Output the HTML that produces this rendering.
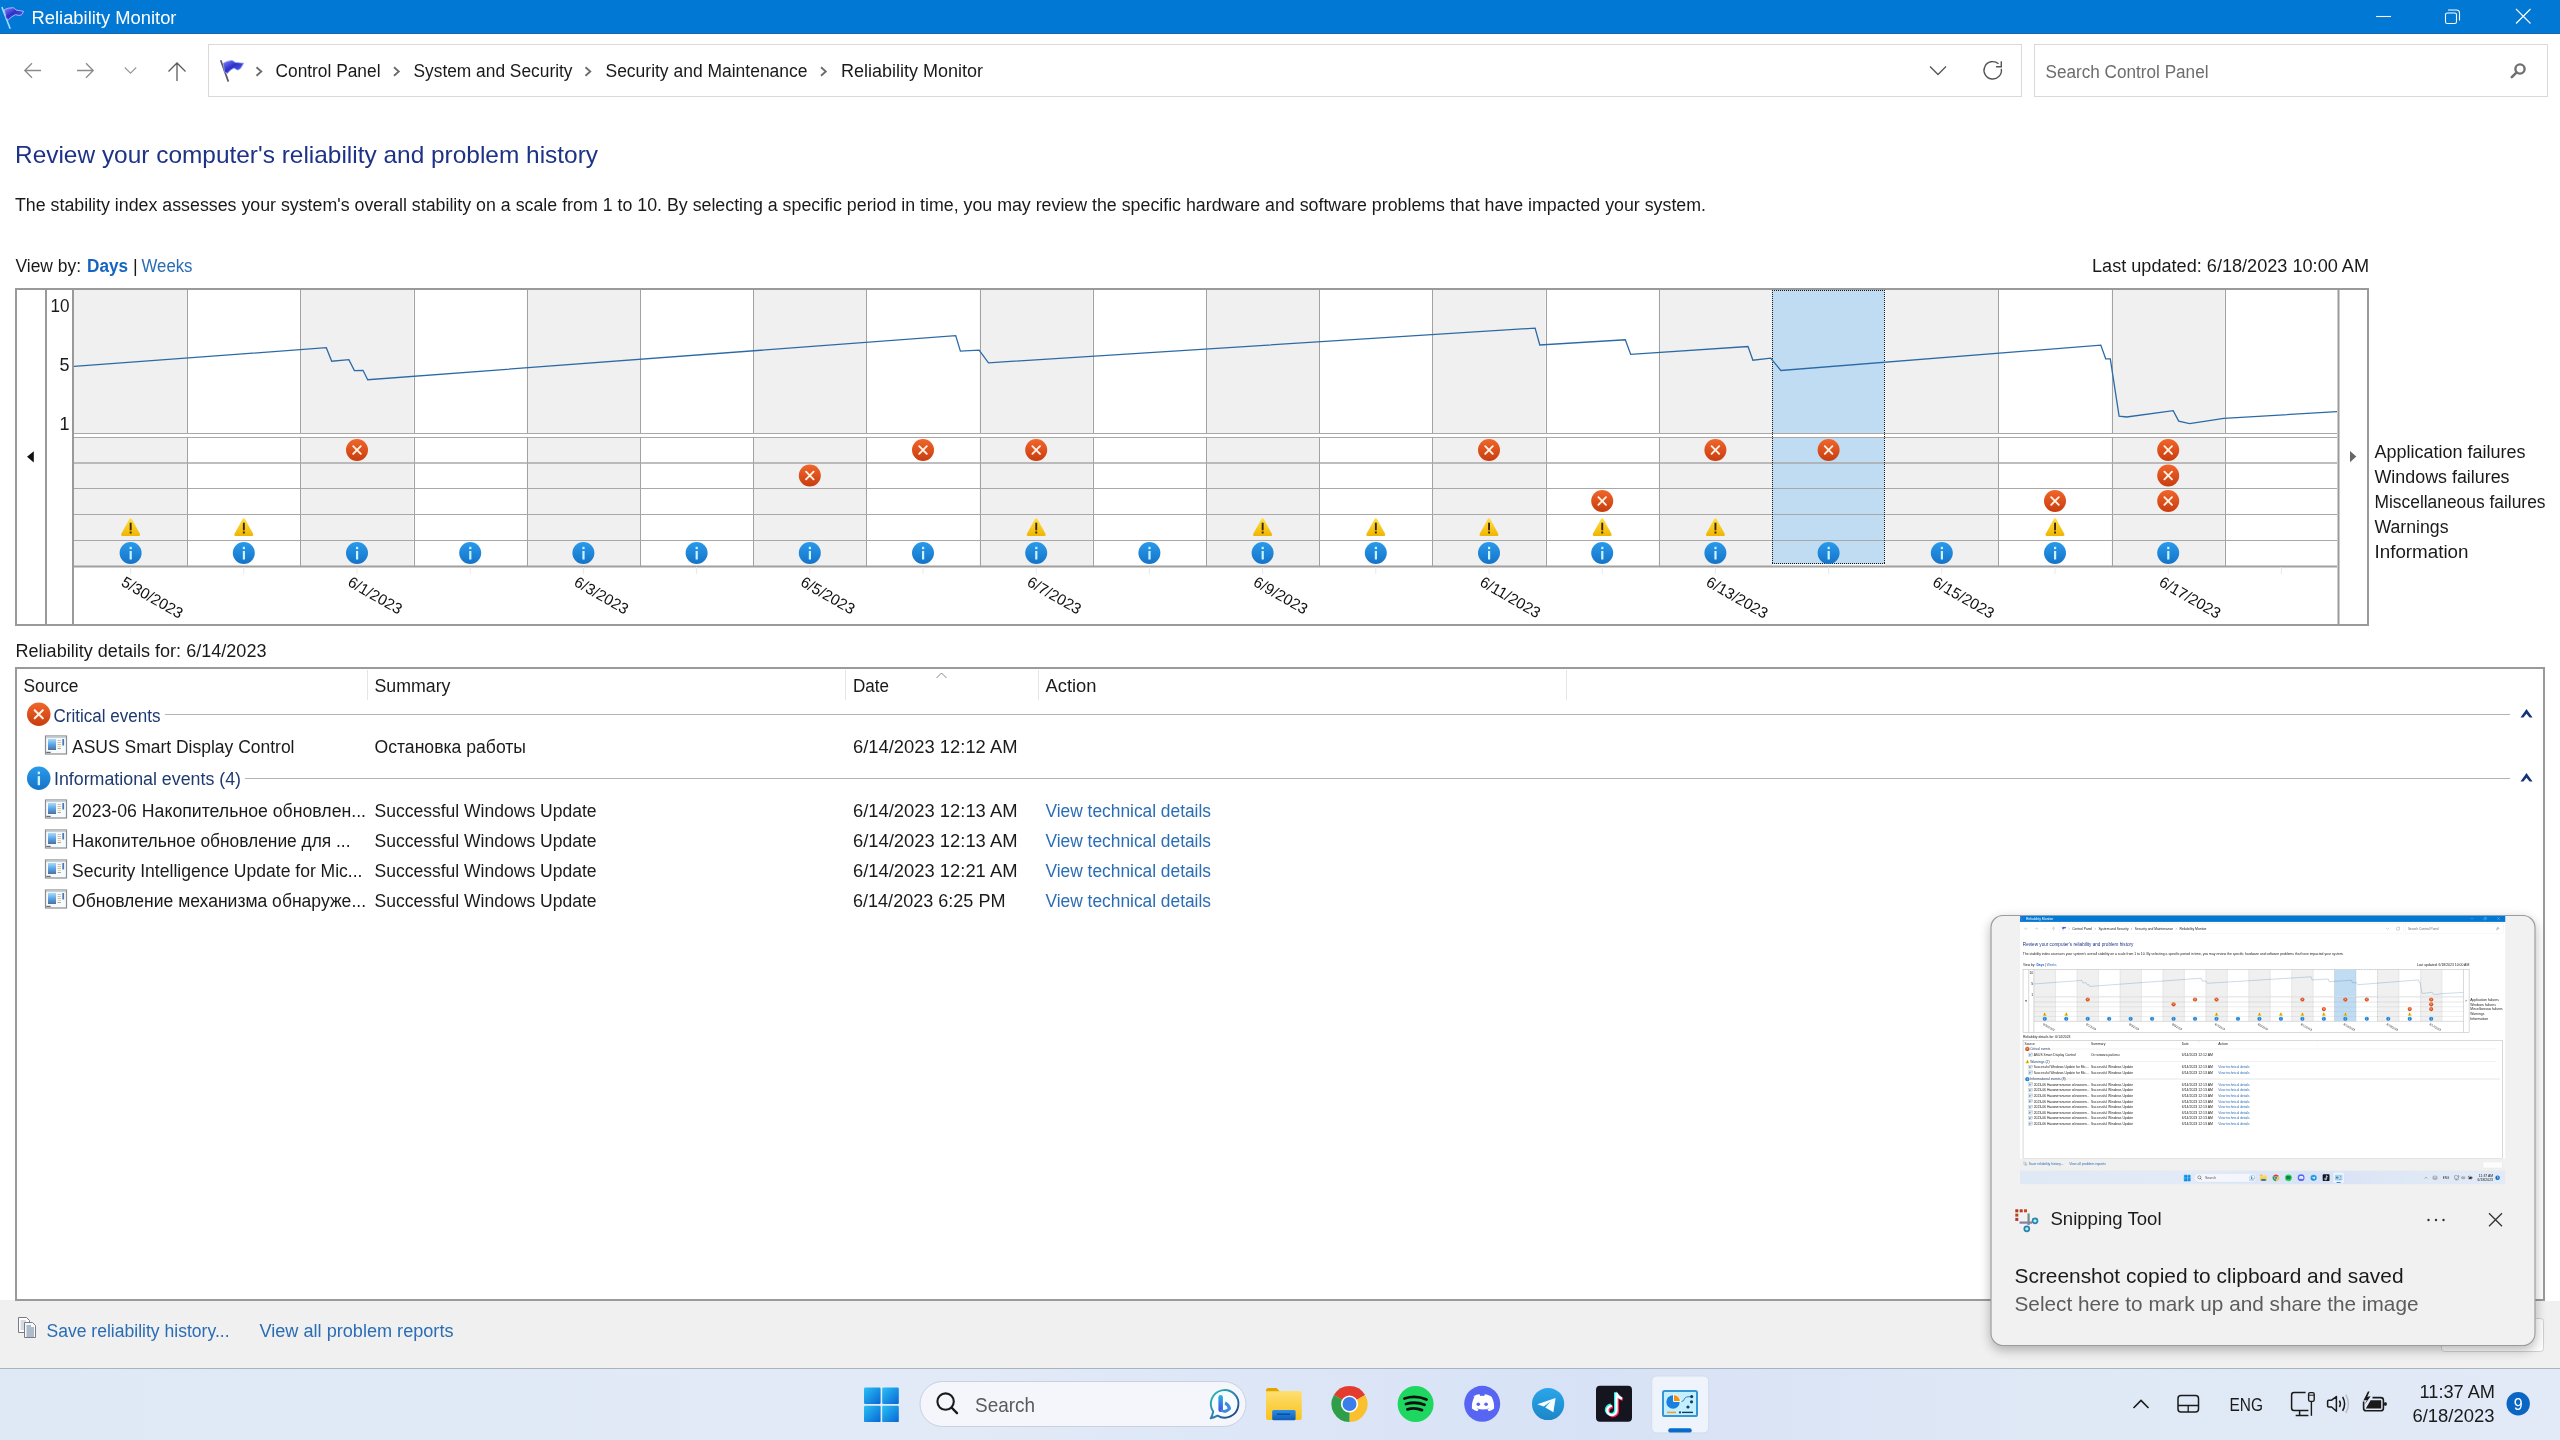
<!DOCTYPE html><html><head><meta charset="utf-8"><style>*{margin:0;padding:0}html,body{width:2560px;height:1440px;overflow:hidden;background:#fff}svg{display:block;will-change:transform}text{font-family:"Liberation Sans",sans-serif;white-space:pre}</style></head><body>
<svg width="2560" height="1440" viewBox="0 0 2560 1440">

<defs>
 <linearGradient id="gErr" x1="0" y1="0" x2="0" y2="1">
  <stop offset="0" stop-color="#f0662a"/><stop offset="1" stop-color="#c83c10"/>
 </linearGradient>
 <linearGradient id="gInfo" x1="0" y1="0" x2="0" y2="1">
  <stop offset="0" stop-color="#2a9aea"/><stop offset="1" stop-color="#1573c8"/>
 </linearGradient>
 <linearGradient id="gWarn" x1="0" y1="0" x2="0" y2="1">
  <stop offset="0" stop-color="#ffe04a"/><stop offset="1" stop-color="#f0b400"/>
 </linearGradient>
 <linearGradient id="gApp" x1="0" y1="0" x2="0" y2="1">
  <stop offset="0" stop-color="#a8dcf5"/><stop offset=".5" stop-color="#5aa6ec"/><stop offset="1" stop-color="#50709a"/>
 </linearGradient>
 <linearGradient id="gFlag" x1="0" y1="0" x2="1" y2="1">
  <stop offset="0" stop-color="#8fa8ff"/><stop offset=".5" stop-color="#3a4fd8"/><stop offset="1" stop-color="#6e8cf0"/>
 </linearGradient>
 <symbol id="err" viewBox="0 0 22 22" overflow="visible">
  <circle cx="11" cy="11" r="11" fill="url(#gErr)"/>
  <path d="M7.2 7.2L14.8 14.8M14.8 7.2L7.2 14.8" stroke="#fff3e6" stroke-width="1.9" stroke-linecap="round"/>
 </symbol>
 <symbol id="info" viewBox="0 0 22 22" overflow="visible">
  <circle cx="11" cy="11" r="11" fill="url(#gInfo)"/>
  <rect x="10" y="9" width="2.2" height="8.5" fill="#c8f4ff"/>
  <rect x="10" y="4.8" width="2.2" height="2.4" fill="#c8f4ff"/>
 </symbol>
 <symbol id="warn" viewBox="0 0 20 19" overflow="visible">
  <path d="M10 0.8 Q10.9 0.8 11.5 1.9 L19.4 16.6 Q20 18.6 18.2 18.6 L1.8 18.6 Q0 18.6 0.6 16.6 L8.5 1.9 Q9.1 0.8 10 0.8Z" fill="url(#gWarn)"/>
  <rect x="9.1" y="5.2" width="1.9" height="7.6" fill="#3a2800"/>
  <rect x="9.1" y="14" width="1.9" height="2" fill="#3a2800"/>
 </symbol>
 <symbol id="app" viewBox="0 0 22 19" overflow="visible">
  <rect x="0.5" y="0.5" width="21" height="18" fill="#f6fbff" stroke="#8c8c8c" stroke-width="1.2"/>
  <rect x="1" y="1" width="20" height="1.6" fill="#c9ced4"/>
  <rect x="3" y="3.5" width="8" height="11" fill="url(#gApp)"/>
  <rect x="12.5" y="4.5" width="3.5" height="0.9" fill="#c8b9b4"/>
  <rect x="12.5" y="6.5" width="3.5" height="0.9" fill="#e0b090"/>
  <rect x="12.5" y="8.5" width="3.5" height="0.9" fill="#e6b070"/>
  <rect x="12.5" y="10.5" width="3.5" height="0.9" fill="#e8d090"/>
  <rect x="12.5" y="12.5" width="3.5" height="0.9" fill="#9aa0a8"/>
  <rect x="17.3" y="3.5" width="1.8" height="6.5" fill="#4a7cb8"/>
  <rect x="1.2" y="16.3" width="4.5" height="1.2" fill="#707070"/>
 </symbol>
 <linearGradient id="gFlag2" x1="0" y1="0" x2="1" y2="1">
  <stop offset="0" stop-color="#7f86ff"/><stop offset=".45" stop-color="#2f30c8"/><stop offset="1" stop-color="#5a6cf0"/>
 </linearGradient>
 <symbol id="flagT" viewBox="0 0 26 26" overflow="visible">
  <path d="M0 0L8.3 21.7" stroke="#9fdcff" stroke-width="1.6"/>
  <path d="M2.4 2.6Q6 0.6 11.4 0.6Q13.2 1.2 14.2 3L21.8 4.2L19.8 7.6Q18 8.6 16.8 8.3L13.5 7.6L10 9.6L6.6 12.6L4.2 11.5Z" fill="url(#gFlag2)" stroke="#a9b4ff" stroke-width="1"/>
 </symbol>
 <symbol id="flagB" viewBox="0 0 26 26" overflow="visible">
  <path d="M0 0L7.7 21.4" stroke="#5a5a66" stroke-width="1.7"/>
  <path d="M2.6 3.1Q6 0.8 11.1 0.2Q13 0.8 14.4 2.2L22.9 3.1L20 8Q18 10 16.6 9.8L13.3 7.8L10 9.8L6.6 13.1L3.8 11.8Z" fill="url(#gFlag2)" stroke="#8f9cf8" stroke-width=".8"/>
 </symbol>
</defs>

<g id="win">
<rect x="0" y="0" width="2560" height="1368" fill="#fff"/>
<rect x="0" y="0" width="2560" height="34" fill="#0078d4"/><rect x="0" y="33" width="2560" height="1" fill="#1866ac"/>
<use href="#flagT" x="1.9" y="7.1" width="26" height="26"/>
<text x="31.5" y="23.5" font-size="18" fill="#fff" textLength="145" lengthAdjust="spacingAndGlyphs">Reliability Monitor</text>
<path d="M2376 16.5H2391" stroke="#fff" stroke-width="1.1"/>
<rect x="2445.5" y="13" width="11" height="10.5" rx="1.8" fill="none" stroke="#fff" stroke-width="1.1"/>
<path d="M2448 10H2456.5Q2459.5 10 2459.5 13V20.5" fill="none" stroke="#fff" stroke-width="1.1"/>
<path d="M2516 9L2530.5 23.5M2530.5 9L2516 23.5" stroke="#fff" stroke-width="1.1"/>
<path d="M41 70.5H25M32 63.3L24.8 70.5L32 77.7" fill="none" stroke="#8a8a8a" stroke-width="1.3"/>
<path d="M77 70.5H93M86 63.3L93.2 70.5L86 77.7" fill="none" stroke="#8a8a8a" stroke-width="1.3"/>
<path d="M124.8 67.5L130.5 73.2L136.2 67.5" fill="none" stroke="#9a9a9a" stroke-width="1.2"/>
<path d="M177 81V63M168.5 71.5L177 63L185.5 71.5" fill="none" stroke="#5c5c5c" stroke-width="1.3"/>
<rect x="208.5" y="44.5" width="1813" height="52" fill="#fff" stroke="#d9d9d9" stroke-width="1"/>
<rect x="2034.5" y="44.5" width="513" height="52" fill="#fff" stroke="#d9d9d9" stroke-width="1"/>
<use href="#flagB" x="220.7" y="60.2" width="26" height="26"/>
<path d="M256.5 67.3L261.3 71.5L256.5 75.7" fill="none" stroke="#6a6a6a" stroke-width="1.8"/>
<path d="M394 67.3L398.8 71.5L394 75.7" fill="none" stroke="#6a6a6a" stroke-width="1.8"/>
<path d="M585.5 67.3L590.3 71.5L585.5 75.7" fill="none" stroke="#6a6a6a" stroke-width="1.8"/>
<path d="M821 67.3L825.8 71.5L821 75.7" fill="none" stroke="#6a6a6a" stroke-width="1.8"/>
<text x="275.5" y="77" font-size="18" fill="#1a1a1a" textLength="105" lengthAdjust="spacingAndGlyphs">Control Panel</text>
<text x="413.5" y="77" font-size="18" fill="#1a1a1a" textLength="159" lengthAdjust="spacingAndGlyphs">System and Security</text>
<text x="605.5" y="77" font-size="18" fill="#1a1a1a" textLength="202" lengthAdjust="spacingAndGlyphs">Security and Maintenance</text>
<text x="841" y="77" font-size="18" fill="#1a1a1a" textLength="142" lengthAdjust="spacingAndGlyphs">Reliability Monitor</text>
<path d="M1930 66.5L1938 74.5L1946 66.5" fill="none" stroke="#555" stroke-width="1.3"/>
<path d="M2001.3 68.8A8.7 8.7 0 1 1 1998.5 63.8" fill="none" stroke="#555" stroke-width="1.4"/>
<path d="M2001.3 61.3V66.8H1996" fill="none" stroke="#555" stroke-width="1.4"/>
<text x="2045.5" y="78" font-size="18" fill="#6d6d6d" textLength="163" lengthAdjust="spacingAndGlyphs">Search Control Panel</text>
<circle cx="2520" cy="69" r="4.6" fill="none" stroke="#707070" stroke-width="2.4"/>
<path d="M2516.4 72.6L2511.8 77.2" stroke="#707070" stroke-width="2.6" stroke-linecap="round"/>
<text x="15" y="163" font-size="24" fill="#1e3287" textLength="583" lengthAdjust="spacingAndGlyphs">Review your computer's reliability and problem history</text>
<text x="15" y="211" font-size="18" fill="#1a1a1a" textLength="1691" lengthAdjust="spacingAndGlyphs">The stability index assesses your system's overall stability on a scale from 1 to 10. By selecting a specific period in time, you may review the specific hardware and software problems that have impacted your system.</text>
<text x="15.5" y="272" font-size="18" fill="#1a1a1a" textLength="65.5" lengthAdjust="spacingAndGlyphs">View by:</text>
<text x="87" y="272" font-size="18" fill="#1565c0" textLength="41" lengthAdjust="spacingAndGlyphs" font-weight="bold">Days</text>
<text x="133" y="272" font-size="18" fill="#1a1a1a">|</text>
<text x="141.5" y="272" font-size="18" fill="#2a6db5" textLength="51" lengthAdjust="spacingAndGlyphs">Weeks</text>
<text x="2092" y="271.5" font-size="18" fill="#1a1a1a" textLength="277" lengthAdjust="spacingAndGlyphs">Last updated: 6/18/2023 10:00 AM</text>
<rect x="74.0" y="290" width="113.2" height="143" fill="#f0f0f0"/>
<rect x="74.0" y="437" width="113.2" height="129" fill="#f0f0f0"/>
<rect x="300.4" y="290" width="113.2" height="143" fill="#f0f0f0"/>
<rect x="300.4" y="437" width="113.2" height="129" fill="#f0f0f0"/>
<rect x="526.8" y="290" width="113.2" height="143" fill="#f0f0f0"/>
<rect x="526.8" y="437" width="113.2" height="129" fill="#f0f0f0"/>
<rect x="753.2" y="290" width="113.2" height="143" fill="#f0f0f0"/>
<rect x="753.2" y="437" width="113.2" height="129" fill="#f0f0f0"/>
<rect x="979.6" y="290" width="113.2" height="143" fill="#f0f0f0"/>
<rect x="979.6" y="437" width="113.2" height="129" fill="#f0f0f0"/>
<rect x="1206.0" y="290" width="113.2" height="143" fill="#f0f0f0"/>
<rect x="1206.0" y="437" width="113.2" height="129" fill="#f0f0f0"/>
<rect x="1432.4" y="290" width="113.2" height="143" fill="#f0f0f0"/>
<rect x="1432.4" y="437" width="113.2" height="129" fill="#f0f0f0"/>
<rect x="1658.8" y="290" width="113.2" height="143" fill="#f0f0f0"/>
<rect x="1658.8" y="437" width="113.2" height="129" fill="#f0f0f0"/>
<rect x="1885.2" y="290" width="113.2" height="143" fill="#f0f0f0"/>
<rect x="1885.2" y="437" width="113.2" height="129" fill="#f0f0f0"/>
<rect x="2111.6" y="290" width="113.2" height="143" fill="#f0f0f0"/>
<rect x="2111.6" y="437" width="113.2" height="129" fill="#f0f0f0"/>
<rect x="1772.0" y="290" width="112.5" height="143" fill="#bfdcf3"/>
<rect x="1772.0" y="437" width="112.5" height="127" fill="#bfdcf3"/>
<path d="M187.5 290V433M187.5 437V566" stroke="#a2a2a2" stroke-width="1"/>
<path d="M300.5 290V433M300.5 437V566" stroke="#a2a2a2" stroke-width="1"/>
<path d="M414.5 290V433M414.5 437V566" stroke="#a2a2a2" stroke-width="1"/>
<path d="M527.5 290V433M527.5 437V566" stroke="#a2a2a2" stroke-width="1"/>
<path d="M640.5 290V433M640.5 437V566" stroke="#a2a2a2" stroke-width="1"/>
<path d="M753.5 290V433M753.5 437V566" stroke="#a2a2a2" stroke-width="1"/>
<path d="M866.5 290V433M866.5 437V566" stroke="#a2a2a2" stroke-width="1"/>
<path d="M980.5 290V433M980.5 437V566" stroke="#a2a2a2" stroke-width="1"/>
<path d="M1093.5 290V433M1093.5 437V566" stroke="#a2a2a2" stroke-width="1"/>
<path d="M1206.5 290V433M1206.5 437V566" stroke="#a2a2a2" stroke-width="1"/>
<path d="M1319.5 290V433M1319.5 437V566" stroke="#a2a2a2" stroke-width="1"/>
<path d="M1432.5 290V433M1432.5 437V566" stroke="#a2a2a2" stroke-width="1"/>
<path d="M1546.5 290V433M1546.5 437V566" stroke="#a2a2a2" stroke-width="1"/>
<path d="M1659.5 290V433M1659.5 437V566" stroke="#a2a2a2" stroke-width="1"/>
<path d="M1998.5 290V433M1998.5 437V566" stroke="#a2a2a2" stroke-width="1"/>
<path d="M2112.5 290V433M2112.5 437V566" stroke="#a2a2a2" stroke-width="1"/>
<path d="M2225.5 290V433M2225.5 437V566" stroke="#a2a2a2" stroke-width="1"/>
<path d="M74 433.5H2337" stroke="#a8a8a8" stroke-width="1"/>
<path d="M74 437.5H2337" stroke="#a8a8a8" stroke-width="1"/>
<path d="M74 488.5H2337" stroke="#a8a8a8" stroke-width="1"/>
<path d="M74 514.5H2337" stroke="#a8a8a8" stroke-width="1"/>
<path d="M74 540.5H2337" stroke="#a8a8a8" stroke-width="1"/>
<path d="M74 463H2337" stroke="#a8a8a8" stroke-width="1.5"/>
<path d="M74 566.5H2337" stroke="#a0a0a0" stroke-width="2"/>
<path d="M1772 290.5H1885M1772 563.5H1885M1772.5 290V564M1884.5 290V564" fill="none" stroke="#1a1a1a" stroke-width="1" stroke-dasharray="1 1" shape-rendering="crispEdges"/>
<rect x="16" y="289" width="2352" height="336" fill="none" stroke="#9a9a9a" stroke-width="2"/>
<path d="M46 289V625M73 289V625M2338.5 289V625" stroke="#9a9a9a" stroke-width="2"/>
<path d="M33.8 451.2V462.5L27 456.8Z" fill="#111"/>
<path d="M2350 451V462.3L2356.3 456.6Z" fill="#666"/>
<text x="50.5" y="312" font-size="18" fill="#1a1a1a" textLength="19" lengthAdjust="spacingAndGlyphs">10</text>
<text x="59.5" y="371" font-size="18" fill="#1a1a1a">5</text>
<text x="59.5" y="430" font-size="18" fill="#1a1a1a">1</text>
<g id="chartFG">
<path d="M74.0 366.4 L326.3 347.7 L331.7 361.2 L348.9 359.7 L354.4 370.6 L363.0 370.3 L367.7 379.7 L955.7 335.6 L960.4 351.1 L979.1 350.2 L988.5 362.8 L1535.1 328.1 L1539.8 345.0 L1625.3 339.8 L1630.7 354.4 L1748.0 346.5 L1752.9 360.2 L1770.7 358.2 L1780.8 370.5 L2100.8 345.1 L2105.7 358.8 L2110.3 358.8 L2119.1 416.2 L2126.7 417.0 L2173.2 410.7 L2178.7 421.1 L2189.6 423.6 L2223.8 418.4 L2337.0 411.6" fill="none" stroke="#2c6aa6" stroke-width="1.3" stroke-linejoin="miter"/>
<path d="M130.6 567V574" stroke="#e8e8e8" stroke-width="1"/>
<path d="M243.8 567V574" stroke="#e8e8e8" stroke-width="1"/>
<path d="M357.0 567V574" stroke="#e8e8e8" stroke-width="1"/>
<path d="M470.2 567V574" stroke="#e8e8e8" stroke-width="1"/>
<path d="M583.4 567V574" stroke="#e8e8e8" stroke-width="1"/>
<path d="M696.6 567V574" stroke="#e8e8e8" stroke-width="1"/>
<path d="M809.8 567V574" stroke="#e8e8e8" stroke-width="1"/>
<path d="M923.0 567V574" stroke="#e8e8e8" stroke-width="1"/>
<path d="M1036.2 567V574" stroke="#e8e8e8" stroke-width="1"/>
<path d="M1149.4 567V574" stroke="#e8e8e8" stroke-width="1"/>
<path d="M1262.6 567V574" stroke="#e8e8e8" stroke-width="1"/>
<path d="M1375.8 567V574" stroke="#e8e8e8" stroke-width="1"/>
<path d="M1489.0 567V574" stroke="#e8e8e8" stroke-width="1"/>
<path d="M1602.2 567V574" stroke="#e8e8e8" stroke-width="1"/>
<path d="M1715.4 567V574" stroke="#e8e8e8" stroke-width="1"/>
<path d="M1828.6 567V574" stroke="#e8e8e8" stroke-width="1"/>
<path d="M1941.8 567V574" stroke="#e8e8e8" stroke-width="1"/>
<path d="M2055.0 567V574" stroke="#e8e8e8" stroke-width="1"/>
<path d="M2168.2 567V574" stroke="#e8e8e8" stroke-width="1"/>
<path d="M2281.4 567V574" stroke="#e8e8e8" stroke-width="1"/>
<use href="#err" x="346.0" y="439.0" width="22" height="22"/>
<use href="#err" x="912.0" y="439.0" width="22" height="22"/>
<use href="#err" x="1025.2" y="439.0" width="22" height="22"/>
<use href="#err" x="1478.0" y="439.0" width="22" height="22"/>
<use href="#err" x="1704.4" y="439.0" width="22" height="22"/>
<use href="#err" x="1817.6" y="439.0" width="22" height="22"/>
<use href="#err" x="2157.2" y="439.0" width="22" height="22"/>
<use href="#err" x="798.8" y="464.5" width="22" height="22"/>
<use href="#err" x="2157.2" y="464.5" width="22" height="22"/>
<use href="#err" x="1591.2" y="490.0" width="22" height="22"/>
<use href="#err" x="2044.0" y="490.0" width="22" height="22"/>
<use href="#err" x="2157.2" y="490.0" width="22" height="22"/>
<use href="#warn" x="120.6" y="517.5" width="20" height="19"/>
<use href="#warn" x="233.8" y="517.5" width="20" height="19"/>
<use href="#warn" x="1026.2" y="517.5" width="20" height="19"/>
<use href="#warn" x="1252.6" y="517.5" width="20" height="19"/>
<use href="#warn" x="1365.8" y="517.5" width="20" height="19"/>
<use href="#warn" x="1479.0" y="517.5" width="20" height="19"/>
<use href="#warn" x="1592.2" y="517.5" width="20" height="19"/>
<use href="#warn" x="1705.4" y="517.5" width="20" height="19"/>
<use href="#warn" x="2045.0" y="517.5" width="20" height="19"/>
<use href="#info" x="119.6" y="542.0" width="22" height="22"/>
<use href="#info" x="232.8" y="542.0" width="22" height="22"/>
<use href="#info" x="346.0" y="542.0" width="22" height="22"/>
<use href="#info" x="459.2" y="542.0" width="22" height="22"/>
<use href="#info" x="572.4" y="542.0" width="22" height="22"/>
<use href="#info" x="685.6" y="542.0" width="22" height="22"/>
<use href="#info" x="798.8" y="542.0" width="22" height="22"/>
<use href="#info" x="912.0" y="542.0" width="22" height="22"/>
<use href="#info" x="1025.2" y="542.0" width="22" height="22"/>
<use href="#info" x="1138.4" y="542.0" width="22" height="22"/>
<use href="#info" x="1251.6" y="542.0" width="22" height="22"/>
<use href="#info" x="1364.8" y="542.0" width="22" height="22"/>
<use href="#info" x="1478.0" y="542.0" width="22" height="22"/>
<use href="#info" x="1591.2" y="542.0" width="22" height="22"/>
<use href="#info" x="1704.4" y="542.0" width="22" height="22"/>
<use href="#info" x="1817.6" y="542.0" width="22" height="22"/>
<use href="#info" x="1930.8" y="542.0" width="22" height="22"/>
<use href="#info" x="2044.0" y="542.0" width="22" height="22"/>
<use href="#info" x="2157.2" y="542.0" width="22" height="22"/>
</g>
<text transform="translate(120.3 585) rotate(30)" font-size="15.3" fill="#111">5/30/2023</text>
<text transform="translate(346.7 585) rotate(30)" font-size="15.3" fill="#111">6/1/2023</text>
<text transform="translate(573.1 585) rotate(30)" font-size="15.3" fill="#111">6/3/2023</text>
<text transform="translate(799.5 585) rotate(30)" font-size="15.3" fill="#111">6/5/2023</text>
<text transform="translate(1025.9 585) rotate(30)" font-size="15.3" fill="#111">6/7/2023</text>
<text transform="translate(1252.3 585) rotate(30)" font-size="15.3" fill="#111">6/9/2023</text>
<text transform="translate(1478.7 585) rotate(30)" font-size="15.3" fill="#111">6/11/2023</text>
<text transform="translate(1705.1 585) rotate(30)" font-size="15.3" fill="#111">6/13/2023</text>
<text transform="translate(1931.5 585) rotate(30)" font-size="15.3" fill="#111">6/15/2023</text>
<text transform="translate(2157.9 585) rotate(30)" font-size="15.3" fill="#111">6/17/2023</text>
<text x="2374.5" y="458" font-size="18" fill="#1a1a1a" textLength="151" lengthAdjust="spacingAndGlyphs">Application failures</text>
<text x="2374.5" y="483" font-size="18" fill="#1a1a1a" textLength="135" lengthAdjust="spacingAndGlyphs">Windows failures</text>
<text x="2374.5" y="508" font-size="18" fill="#1a1a1a" textLength="171" lengthAdjust="spacingAndGlyphs">Miscellaneous failures</text>
<text x="2374.5" y="533" font-size="18" fill="#1a1a1a" textLength="74" lengthAdjust="spacingAndGlyphs">Warnings</text>
<text x="2374.5" y="558" font-size="18" fill="#1a1a1a" textLength="94" lengthAdjust="spacingAndGlyphs">Information</text>
<text x="15.5" y="657" font-size="18" fill="#1a1a1a" textLength="251" lengthAdjust="spacingAndGlyphs">Reliability details for: 6/14/2023</text>
<rect x="16" y="668" width="2528" height="632" fill="#fff" stroke="#9a9a9a" stroke-width="2"/>
<path d="M367.5 670V700" stroke="#e5e5e5" stroke-width="1"/>
<path d="M845.5 670V700" stroke="#e5e5e5" stroke-width="1"/>
<path d="M1038.5 670V700" stroke="#e5e5e5" stroke-width="1"/>
<path d="M1566.5 670V700" stroke="#e5e5e5" stroke-width="1"/>
<text x="23.5" y="692" font-size="18" fill="#1a1a1a" textLength="55" lengthAdjust="spacingAndGlyphs">Source</text>
<text x="374.5" y="692" font-size="18" fill="#1a1a1a" textLength="76" lengthAdjust="spacingAndGlyphs">Summary</text>
<text x="853" y="692" font-size="18" fill="#1a1a1a" textLength="36" lengthAdjust="spacingAndGlyphs">Date</text>
<text x="1045.5" y="692" font-size="18" fill="#1a1a1a" textLength="51" lengthAdjust="spacingAndGlyphs">Action</text>
<path d="M936.5 678L941.5 673L946.5 678" fill="none" stroke="#888" stroke-width="1"/>
<rect x="0" y="1301" width="2560" height="67" fill="#f0f0f0"/>
<rect x="0" y="1300" width="15" height="1" fill="#f0f0f0"/>
<path d="M0 1368.5H2560" stroke="#a9b4c0" stroke-width="1"/>
<path d="M18.5 1317.5H26.5L29.5 1320.5V1332.5H18.5Z" fill="#fff" stroke="#7a7a80" stroke-width="1"/>
<path d="M20.5 1321H26M20.5 1323H26M20.5 1325H26M20.5 1327H26M20.5 1329H26" stroke="#9aa4b4" stroke-width=".8"/>
<path d="M24.5 1322.5H32.5L35.5 1325.5V1337.5H24.5Z" fill="#f4fbff" stroke="#7a7a80" stroke-width="1"/>
<path d="M26.5 1326H31M26.5 1328H34M26.5 1330H34M26.5 1332H34M26.5 1334H34M26.5 1336H34" stroke="#5a6a88" stroke-width=".9"/>
<text x="46.5" y="1336.5" font-size="18" fill="#2a6db5" textLength="183" lengthAdjust="spacingAndGlyphs">Save reliability history...</text>
<text x="259.5" y="1336.5" font-size="18" fill="#2a6db5" textLength="194" lengthAdjust="spacingAndGlyphs">View all problem reports</text>
<rect x="2441.5" y="1318.5" width="102" height="33" rx="3" fill="#fdfdfd" stroke="#d0d0d0" stroke-width="1"/>
<defs>
<linearGradient id="gTask" x1="0" y1="0" x2="1" y2="0">
 <stop offset="0" stop-color="#dfe9f5"/><stop offset=".38" stop-color="#e2eaf7"/><stop offset=".62" stop-color="#d7e2f6"/><stop offset=".8" stop-color="#dfe8f5"/><stop offset="1" stop-color="#e1eaf6"/>
</linearGradient>
<linearGradient id="gWin" x1="0" y1="0" x2="1" y2="1"><stop offset="0" stop-color="#2ac0f4"/><stop offset="1" stop-color="#0866d6"/></linearGradient>
<linearGradient id="gFold" x1="0" y1="0" x2="0" y2="1"><stop offset="0" stop-color="#ffe27a"/><stop offset="1" stop-color="#f9c21e"/></linearGradient>
<linearGradient id="gDraw" x1="0" y1="0" x2="0" y2="1"><stop offset="0" stop-color="#2c8fe8"/><stop offset="1" stop-color="#0f5cb8"/></linearGradient>
</defs>
<rect x="0" y="1369" width="2560" height="71" fill="url(#gTask)"/>
<rect x="864" y="1387.5" width="16.6" height="16.4" rx="1.2" fill="url(#gWin)"/>
<rect x="882.2" y="1387.5" width="16.6" height="16.4" rx="1.2" fill="url(#gWin)"/>
<rect x="864" y="1405.7" width="16.6" height="16.4" rx="1.2" fill="url(#gWin)"/>
<rect x="882.2" y="1405.7" width="16.6" height="16.4" rx="1.2" fill="url(#gWin)"/>
<rect x="920" y="1381.5" width="326" height="45" rx="22.5" fill="#f4f6fc" stroke="#c9d1de" stroke-width="1"/>
<circle cx="945.6" cy="1401.6" r="8.2" fill="none" stroke="#1a1a1a" stroke-width="2.1"/>
<path d="M951.5 1407.5L957 1413.2" stroke="#1a1a1a" stroke-width="2.4" stroke-linecap="round"/>
<text x="975" y="1411.5" font-size="19.8" fill="#5a5a5a" textLength="60" lengthAdjust="spacingAndGlyphs">Search</text>
<defs><linearGradient id="gBing" x1="0" y1="0" x2="1" y2="1"><stop offset="0" stop-color="#27c0b0"/><stop offset=".55" stop-color="#2f78b0"/><stop offset="1" stop-color="#1b2f78"/></linearGradient><linearGradient id="gBingB" x1="0" y1="0" x2="0" y2="1"><stop offset="0" stop-color="#26b8d8"/><stop offset=".6" stop-color="#3a70e8"/><stop offset="1" stop-color="#4a4ad8"/></linearGradient></defs>
<path d="M1213.2 1411.5A13.8 13.8 0 1 1 1217.5 1415.6Q1214 1417.4 1210.6 1418.4Q1212.6 1415.2 1213.2 1411.5Z" fill="#f6fbff" stroke="url(#gBing)" stroke-width="1.9" stroke-linejoin="round"/>
<rect x="1218.4" y="1395" width="4.5" height="17" rx="2.2" fill="url(#gBingB)"/>
<path d="M1220.5 1410.8Q1224.5 1415.5 1231 1409.2Q1231 1404.5 1225.5 1401.5L1224.6 1404.6Q1227.8 1406.4 1227.6 1408.6Q1224.5 1411.2 1220.5 1409Z" fill="#3a8ae0"/>
<path d="M1266 1390.5q0-2.5 2.5-2.5h8l3 3h19.7q2.5 0 2.5 2.5V1418q0 2-2 2h-31.7q-2 0-2-2z" fill="url(#gFold)"/>
<path d="M1266 1390.5q0-2.5 2.5-2.5h8l3 3.2h-13.5z" fill="#e0a500"/>
<rect x="1272.2" y="1410" width="23.4" height="10.2" rx="1.5" fill="url(#gDraw)"/>
<rect x="1277" y="1413.5" width="13" height="1.4" fill="#0b4b98"/>
<path d="M1349.5 1404L1333.91 1395.00A18 18 0 0 1 1365.09 1395.00Z" fill="#e33b2e"/>
<path d="M1349.5 1404L1365.09 1395.00A18 18 0 0 1 1349.50 1422.00Z" fill="#fbc02d"/>
<path d="M1349.5 1404L1349.50 1422.00A18 18 0 0 1 1333.91 1395.00Z" fill="#2e9e48"/>
<circle cx="1349.5" cy="1404" r="8.6" fill="#fff"/><circle cx="1349.5" cy="1404" r="7" fill="#3b7de9"/>
<circle cx="1415.6" cy="1404" r="18" fill="#1ed760"/>
<path d="M1404.5 1398.5q11-3.5 22 1M1406 1404q9.5-2.8 18.5 0.8M1407.5 1409.3q7.5-2 14.5 0.8" fill="none" stroke="#111" stroke-width="2.8" stroke-linecap="round"/>
<circle cx="1482.2" cy="1403.8" r="18" fill="#5865f2"/>
<path d="M1473 1396.5q4.5-2.5 6.5-2.2l0.8 1.6q2-0.4 3.8 0l0.8-1.6q2 0 6.5 2.2q3.2 5.5 2.7 12q-2.6 2-5.4 2.8l-1.3-2q1.3-0.5 2.3-1.2q-6.5 3-13.4 0q1 0.7 2.3 1.2l-1.3 2q-2.8-0.8-5.4-2.8q-0.5-6.5 2.7-12z" fill="#fff"/>
<circle cx="1478.3" cy="1404.3" r="1.8" fill="#5865f2"/><circle cx="1486.1" cy="1404.3" r="1.8" fill="#5865f2"/>
<defs><linearGradient id="gTg" x1="0" y1="0" x2="0" y2="1"><stop offset="0" stop-color="#2aa6ea"/><stop offset="1" stop-color="#1c86c8"/></linearGradient></defs><circle cx="1548.1" cy="1404" r="16.1" fill="url(#gTg)"/>
<path d="M1537.3 1404.3L1555.6 1397.9L1553.4 1412.3L1545.3 1407.4L1550.6 1401.4L1543.8 1406.6Z" fill="#f4feff"/>
<rect x="1596" y="1385.8" width="36" height="36" rx="4" fill="#15151f"/>
<path d="M1616.5 1393v17.5a4.6 4.6 0 1 1 -4.6-4.6M1616.5 1393q1 4.5 5.5 5.5" fill="none" stroke="#fe2c55" stroke-width="3" transform="translate(1 0.8)"/>
<path d="M1616.5 1393v17.5a4.6 4.6 0 1 1 -4.6-4.6M1616.5 1393q1 4.5 5.5 5.5" fill="none" stroke="#25f4ee" stroke-width="3" transform="translate(-1 -0.8)"/>
<path d="M1616.5 1393v17.5a4.6 4.6 0 1 1 -4.6-4.6M1616.5 1393q1 4.5 5.5 5.5" fill="none" stroke="#fff" stroke-width="2.4"/>
<rect x="1651.7" y="1376" width="56.9" height="56.9" rx="5" fill="#eef3fc" stroke="#d5dde9" stroke-width="1"/>
<rect x="1663" y="1391" width="34" height="25" rx="1.6" fill="#c4efff" stroke="#3596d6" stroke-width="2"/>
<circle cx="1673" cy="1402" r="6.7" fill="#1a80e0"/>
<path d="M1673.5 1401.5V1394.5A7.2 7.2 0 0 1 1680.5 1401.5Z" fill="#f5920f" stroke="#ffffff" stroke-width="0.9"/>
<path d="M1681.5 1401.5Q1684 1401.5 1684.5 1398.5Q1685 1396.5 1691.5 1396.5" fill="none" stroke="#3a7ab8" stroke-width="1"/>
<circle cx="1691.7" cy="1396.6" r="1.6" fill="#163a66"/><circle cx="1691.5" cy="1401.8" r="1.6" fill="#163a66"/><circle cx="1688" cy="1407" r="1.6" fill="#163a66"/>
<rect x="1667" y="1411.6" width="9" height="1.6" fill="#f0a030"/><circle cx="1680" cy="1412.4" r="1.1" fill="#163a66"/><rect x="1682" y="1411.7" width="11" height="1.4" fill="#163a66"/>
<rect x="1668.2" y="1428.2" width="23.6" height="4.4" rx="2.2" fill="#0a6cc8"/>
<path d="M2133.5 1408L2141 1400.5L2148.5 1408" fill="none" stroke="#1a1a1a" stroke-width="1.6"/>
<rect x="2178" y="1395.5" width="20.5" height="16.5" rx="3" fill="none" stroke="#1a1a1a" stroke-width="1.5"/>
<path d="M2178 1405.5H2198.5M2188.2 1405.5V1412" stroke="#1a1a1a" stroke-width="1.3"/>
<text x="2229.5" y="1410.5" font-size="18" fill="#1a1a1a" textLength="33.5" lengthAdjust="spacingAndGlyphs">ENG</text>
<path d="M2305.6 1392.6H2294Q2291.6 1392.6 2291.6 1395V1408Q2291.6 1410.5 2294 1410.5H2308.4" fill="none" stroke="#1a1a1a" stroke-width="1.5"/>
<path d="M2299.6 1410.5V1415.3M2295.7 1415.6H2308.4" stroke="#1a1a1a" stroke-width="1.5"/>
<rect x="2308.6" y="1392.6" width="5.6" height="8.8" rx="1.6" fill="none" stroke="#1a1a1a" stroke-width="1.4"/>
<path d="M2308.8 1395.2H2314" stroke="#1a1a1a" stroke-width="1"/>
<path d="M2311.4 1401.4V1415.8" stroke="#1a1a1a" stroke-width="1.4"/>
<path d="M2336.4 1396.6L2331.6 1400.2H2328.8Q2327.6 1400.2 2327.6 1401.4V1405.8Q2327.6 1407 2328.8 1407H2331.6L2336.4 1411.2Z" fill="none" stroke="#1a1a1a" stroke-width="1.5" stroke-linejoin="round"/>
<path d="M2339.4 1400.6Q2341.4 1403.8 2339.4 1407M2342.6 1396.8Q2346.6 1403.8 2342.6 1410.8" fill="none" stroke="#1a1a1a" stroke-width="1.5"/>
<path d="M2345.8 1394.6Q2351 1403.8 2345.8 1413" fill="none" stroke="#b4bac4" stroke-width="1.3"/>
<path d="M2372.5 1397.6H2380.8Q2383.4 1397.6 2383.4 1400.2V1408.2Q2383.4 1410.8 2380.8 1410.8H2366.2Q2363.6 1410.8 2363.6 1408.2V1401.5" fill="none" stroke="#1a1a1a" stroke-width="1.6"/>
<path d="M2365.8 1408.6L2370.6 1400.2H2381.2V1408.6Z" fill="#1a1a1a"/>
<rect x="2384" y="1402.2" width="2.8" height="3.6" rx="1.2" fill="#1a1a1a"/>
<path d="M2367.9 1391.6L2363.4 1400.4L2366.9 1399.9L2364.6 1404.4L2370.6 1396.2L2367.3 1396.7L2369.6 1391.6Z" fill="#1a1a1a"/>
<text x="2419.5" y="1397.5" font-size="18" fill="#1a1a1a" textLength="75.5" lengthAdjust="spacingAndGlyphs">11:37 AM</text>
<text x="2412.5" y="1421.5" font-size="18" fill="#1a1a1a" textLength="82" lengthAdjust="spacingAndGlyphs">6/18/2023</text>
<circle cx="2518.2" cy="1403.7" r="11.7" fill="#0a66c2"/>
<text x="2518.2" y="1409.8" font-size="16" fill="#fff" text-anchor="middle">9</text>
</g>
<use href="#err" x="27" y="702.5" width="23.5" height="23.5"/>
<text x="53.5" y="722" font-size="18" fill="#1f3a70" textLength="107" lengthAdjust="spacingAndGlyphs">Critical events</text>
<path d="M165 714.5H2510" stroke="#b4b4b4" stroke-width="1"/>
<path d="M2520.5 717.5L2526.5 709L2532.5 717.5H2529.6L2526.5 713.8L2523.4 717.5Z" fill="#15337a"/>
<use href="#info" x="27" y="766.5" width="23.5" height="23.5"/>
<text x="54" y="785" font-size="18" fill="#1f3a70" textLength="187" lengthAdjust="spacingAndGlyphs">Informational events (4)</text>
<path d="M245 778.5H2510" stroke="#b4b4b4" stroke-width="1"/>
<path d="M2520.5 781.5L2526.5 773L2532.5 781.5H2529.6L2526.5 777.8L2523.4 781.5Z" fill="#15337a"/>
<use href="#app" x="45" y="735.5" width="22" height="19"/>
<text x="72" y="753" font-size="18" fill="#1a1a1a" textLength="222.5" lengthAdjust="spacingAndGlyphs">ASUS Smart Display Control</text>
<text x="374.5" y="753" font-size="18" fill="#1a1a1a" textLength="151.5" lengthAdjust="spacingAndGlyphs">Остановка работы</text>
<text x="853" y="753" font-size="18" fill="#1a1a1a" textLength="164.5" lengthAdjust="spacingAndGlyphs">6/14/2023 12:12 AM</text>
<use href="#app" x="45" y="799.5" width="22" height="19"/>
<text x="72" y="817" font-size="18" fill="#1a1a1a" textLength="294" lengthAdjust="spacingAndGlyphs">2023-06 Накопительное обновлен...</text>
<text x="374.5" y="817" font-size="18" fill="#1a1a1a" textLength="222" lengthAdjust="spacingAndGlyphs">Successful Windows Update</text>
<text x="853" y="817" font-size="18" fill="#1a1a1a" textLength="164.5" lengthAdjust="spacingAndGlyphs">6/14/2023 12:13 AM</text>
<text x="1045.5" y="817" font-size="18" fill="#2a6db5" textLength="165.5" lengthAdjust="spacingAndGlyphs">View technical details</text>
<use href="#app" x="45" y="829.5" width="22" height="19"/>
<text x="72" y="847" font-size="18" fill="#1a1a1a" textLength="278.5" lengthAdjust="spacingAndGlyphs">Накопительное обновление для ...</text>
<text x="374.5" y="847" font-size="18" fill="#1a1a1a" textLength="222" lengthAdjust="spacingAndGlyphs">Successful Windows Update</text>
<text x="853" y="847" font-size="18" fill="#1a1a1a" textLength="164.5" lengthAdjust="spacingAndGlyphs">6/14/2023 12:13 AM</text>
<text x="1045.5" y="847" font-size="18" fill="#2a6db5" textLength="165.5" lengthAdjust="spacingAndGlyphs">View technical details</text>
<use href="#app" x="45" y="859.5" width="22" height="19"/>
<text x="72" y="877" font-size="18" fill="#1a1a1a" textLength="290.5" lengthAdjust="spacingAndGlyphs">Security Intelligence Update for Mic...</text>
<text x="374.5" y="877" font-size="18" fill="#1a1a1a" textLength="222" lengthAdjust="spacingAndGlyphs">Successful Windows Update</text>
<text x="853" y="877" font-size="18" fill="#1a1a1a" textLength="164.5" lengthAdjust="spacingAndGlyphs">6/14/2023 12:21 AM</text>
<text x="1045.5" y="877" font-size="18" fill="#2a6db5" textLength="165.5" lengthAdjust="spacingAndGlyphs">View technical details</text>
<use href="#app" x="45" y="889.5" width="22" height="19"/>
<text x="72" y="907" font-size="18" fill="#1a1a1a" textLength="294" lengthAdjust="spacingAndGlyphs">Обновление механизма обнаруже...</text>
<text x="374.5" y="907" font-size="18" fill="#1a1a1a" textLength="222" lengthAdjust="spacingAndGlyphs">Successful Windows Update</text>
<text x="853" y="907" font-size="18" fill="#1a1a1a" textLength="152.5" lengthAdjust="spacingAndGlyphs">6/14/2023 6:25 PM</text>
<text x="1045.5" y="907" font-size="18" fill="#2a6db5" textLength="165.5" lengthAdjust="spacingAndGlyphs">View technical details</text>
<defs><g id="thumbRows"><clipPath id="clipC1415"><rect x="1658" y="290" width="227" height="276"/></clipPath><rect x="1658.5" y="290" width="113.5" height="143" fill="#bfdcf3"/><rect x="1658.5" y="437" width="113.5" height="129" fill="#bfdcf3"/><rect x="1772" y="290" width="113" height="143" fill="#ffffff"/><rect x="1772" y="437" width="113" height="129" fill="#ffffff"/><path d="M1658.5 290V433M1658.5 437V566M1771.5 290V433M1771.5 437V566M1885.5 290V433M1885.5 437V566" stroke="#a2a2a2" stroke-width="1"/><path d="M1658 437.5H1886M1658 489H1886M1658 514.5H1886M1658 540.5H1886" stroke="#a8a8a8" stroke-width="1"/><path d="M1658 463H1886" stroke="#a8a8a8" stroke-width="1.5"/><use href="#chartFG" clip-path="url(#clipC1415)"/><use href="#err" x="27" y="702.5" width="23.5" height="23.5"/><text x="53.5" y="722" font-size="18" fill="#1f3a70" textLength="107" lengthAdjust="spacingAndGlyphs">Critical events</text><path d="M165 714.5H2510" stroke="#b4b4b4" stroke-width="1"/><use href="#app" x="45" y="735.5" width="22" height="19"/><text x="72" y="753" font-size="18" fill="#1a1a1a" textLength="222.5" lengthAdjust="spacingAndGlyphs">ASUS Smart Display Control</text><text x="374.5" y="753" font-size="18" fill="#1a1a1a" textLength="151.5" lengthAdjust="spacingAndGlyphs">Остановка работы</text><text x="853" y="753" font-size="18" fill="#1a1a1a" textLength="164.5" lengthAdjust="spacingAndGlyphs">6/14/2023 12:12 AM</text><use href="#warn" x="28" y="772" width="22" height="20"/><text x="54" y="788" font-size="18" fill="#1f3a70">Warnings (2)</text><path d="M165 781.5H2510" stroke="#b4b4b4" stroke-width="1"/><use href="#app" x="45" y="800.5" width="22" height="19"/><text x="72" y="818" font-size="18" fill="#1a1a1a" textLength="290" lengthAdjust="spacingAndGlyphs">Successful Windows Update for Mic...</text><text x="374.5" y="818" font-size="18" fill="#1a1a1a" textLength="222" lengthAdjust="spacingAndGlyphs">Successful Windows Update</text><text x="853" y="818" font-size="18" fill="#1a1a1a" textLength="164.5" lengthAdjust="spacingAndGlyphs">6/14/2023 12:13 AM</text><text x="1045.5" y="818" font-size="18" fill="#2a6db5" textLength="165.5" lengthAdjust="spacingAndGlyphs">View technical details</text><use href="#app" x="45" y="830.5" width="22" height="19"/><text x="72" y="848" font-size="18" fill="#1a1a1a" textLength="290" lengthAdjust="spacingAndGlyphs">Successful Windows Update for Mic...</text><text x="374.5" y="848" font-size="18" fill="#1a1a1a" textLength="222" lengthAdjust="spacingAndGlyphs">Successful Windows Update</text><text x="853" y="848" font-size="18" fill="#1a1a1a" textLength="164.5" lengthAdjust="spacingAndGlyphs">6/14/2023 12:13 AM</text><text x="1045.5" y="848" font-size="18" fill="#2a6db5" textLength="165.5" lengthAdjust="spacingAndGlyphs">View technical details</text><use href="#info" x="27" y="864" width="23.5" height="23.5"/><text x="54" y="882" font-size="18" fill="#1f3a70" textLength="187" lengthAdjust="spacingAndGlyphs">Informational events (8)</text><path d="M20 875.5H2530" stroke="#a0a0a0" stroke-width="1.5"/><use href="#app" x="45" y="894.5" width="22" height="19"/><text x="72" y="912" font-size="18" fill="#1a1a1a" textLength="294" lengthAdjust="spacingAndGlyphs">2023-06 Накопительное обновлен...</text><text x="374.5" y="912" font-size="18" fill="#1a1a1a" textLength="222" lengthAdjust="spacingAndGlyphs">Successful Windows Update</text><text x="853" y="912" font-size="18" fill="#1a1a1a" textLength="164.5" lengthAdjust="spacingAndGlyphs">6/14/2023 12:13 AM</text><text x="1045.5" y="912" font-size="18" fill="#2a6db5" textLength="165.5" lengthAdjust="spacingAndGlyphs">View technical details</text><use href="#app" x="45" y="924.5" width="22" height="19"/><text x="72" y="942" font-size="18" fill="#1a1a1a" textLength="294" lengthAdjust="spacingAndGlyphs">2023-06 Накопительное обновлен...</text><text x="374.5" y="942" font-size="18" fill="#1a1a1a" textLength="222" lengthAdjust="spacingAndGlyphs">Successful Windows Update</text><text x="853" y="942" font-size="18" fill="#1a1a1a" textLength="164.5" lengthAdjust="spacingAndGlyphs">6/14/2023 12:13 AM</text><text x="1045.5" y="942" font-size="18" fill="#2a6db5" textLength="165.5" lengthAdjust="spacingAndGlyphs">View technical details</text><use href="#app" x="45" y="954.5" width="22" height="19"/><text x="72" y="972" font-size="18" fill="#1a1a1a" textLength="294" lengthAdjust="spacingAndGlyphs">2023-06 Накопительное обновлен...</text><text x="374.5" y="972" font-size="18" fill="#1a1a1a" textLength="222" lengthAdjust="spacingAndGlyphs">Successful Windows Update</text><text x="853" y="972" font-size="18" fill="#1a1a1a" textLength="164.5" lengthAdjust="spacingAndGlyphs">6/14/2023 12:13 AM</text><text x="1045.5" y="972" font-size="18" fill="#2a6db5" textLength="165.5" lengthAdjust="spacingAndGlyphs">View technical details</text><use href="#app" x="45" y="984.5" width="22" height="19"/><text x="72" y="1002" font-size="18" fill="#1a1a1a" textLength="294" lengthAdjust="spacingAndGlyphs">2023-06 Накопительное обновлен...</text><text x="374.5" y="1002" font-size="18" fill="#1a1a1a" textLength="222" lengthAdjust="spacingAndGlyphs">Successful Windows Update</text><text x="853" y="1002" font-size="18" fill="#1a1a1a" textLength="164.5" lengthAdjust="spacingAndGlyphs">6/14/2023 12:13 AM</text><text x="1045.5" y="1002" font-size="18" fill="#2a6db5" textLength="165.5" lengthAdjust="spacingAndGlyphs">View technical details</text><use href="#app" x="45" y="1014.5" width="22" height="19"/><text x="72" y="1032" font-size="18" fill="#1a1a1a" textLength="294" lengthAdjust="spacingAndGlyphs">2023-06 Накопительное обновлен...</text><text x="374.5" y="1032" font-size="18" fill="#1a1a1a" textLength="222" lengthAdjust="spacingAndGlyphs">Successful Windows Update</text><text x="853" y="1032" font-size="18" fill="#1a1a1a" textLength="164.5" lengthAdjust="spacingAndGlyphs">6/14/2023 12:13 AM</text><text x="1045.5" y="1032" font-size="18" fill="#2a6db5" textLength="165.5" lengthAdjust="spacingAndGlyphs">View technical details</text><use href="#app" x="45" y="1044.5" width="22" height="19"/><text x="72" y="1062" font-size="18" fill="#1a1a1a" textLength="294" lengthAdjust="spacingAndGlyphs">2023-06 Накопительное обновлен...</text><text x="374.5" y="1062" font-size="18" fill="#1a1a1a" textLength="222" lengthAdjust="spacingAndGlyphs">Successful Windows Update</text><text x="853" y="1062" font-size="18" fill="#1a1a1a" textLength="164.5" lengthAdjust="spacingAndGlyphs">6/14/2023 12:13 AM</text><text x="1045.5" y="1062" font-size="18" fill="#2a6db5" textLength="165.5" lengthAdjust="spacingAndGlyphs">View technical details</text><use href="#app" x="45" y="1074.5" width="22" height="19"/><text x="72" y="1092" font-size="18" fill="#1a1a1a" textLength="294" lengthAdjust="spacingAndGlyphs">2023-06 Накопительное обновлен...</text><text x="374.5" y="1092" font-size="18" fill="#1a1a1a" textLength="222" lengthAdjust="spacingAndGlyphs">Successful Windows Update</text><text x="853" y="1092" font-size="18" fill="#1a1a1a" textLength="164.5" lengthAdjust="spacingAndGlyphs">6/14/2023 12:13 AM</text><text x="1045.5" y="1092" font-size="18" fill="#2a6db5" textLength="165.5" lengthAdjust="spacingAndGlyphs">View technical details</text><use href="#app" x="45" y="1104.5" width="22" height="19"/><text x="72" y="1122" font-size="18" fill="#1a1a1a" textLength="294" lengthAdjust="spacingAndGlyphs">2023-06 Накопительное обновлен...</text><text x="374.5" y="1122" font-size="18" fill="#1a1a1a" textLength="222" lengthAdjust="spacingAndGlyphs">Successful Windows Update</text><text x="853" y="1122" font-size="18" fill="#1a1a1a" textLength="164.5" lengthAdjust="spacingAndGlyphs">6/14/2023 12:13 AM</text><text x="1045.5" y="1122" font-size="18" fill="#2a6db5" textLength="165.5" lengthAdjust="spacingAndGlyphs">View technical details</text></g></defs>
<defs><filter id="shadow" x="-10%" y="-10%" width="120%" height="120%"><feGaussianBlur in="SourceAlpha" stdDeviation="6"/><feOffset dy="4"/><feComponentTransfer><feFuncA type="linear" slope="0.28"/></feComponentTransfer><feMerge><feMergeNode/><feMergeNode in="SourceGraphic"/></feMerge></filter>
<clipPath id="thumbClip"><rect x="2020" y="915.5" width="485.5" height="269"/></clipPath></defs>
<rect x="1991" y="915.5" width="544" height="430" rx="12" fill="#f1f1f1" stroke="#9c9c9c" stroke-width="1.2" filter="url(#shadow)"/>
<g clip-path="url(#thumbClip)"><g transform="translate(2020 915.5) scale(0.18965 0.1868)"><use href="#win"/><use href="#thumbRows"/></g></g>
<rect x="2015.3" y="1209.3" width="3" height="3" fill="#a83c20"/><rect x="2019.7" y="1209.3" width="3" height="3" fill="#b83a30"/><rect x="2024" y="1209.3" width="3" height="3" fill="#d04812"/><rect x="2015.3" y="1213.6" width="3" height="3" fill="#b84a10"/><rect x="2015.3" y="1217.9" width="3" height="3" fill="#a83838"/>
<rect x="2027.5" y="1213.5" width="2.2" height="11.5" fill="#6e8e90"/><rect x="2019.5" y="1221.5" width="12.5" height="2.2" fill="#8a7c9c"/>
<circle cx="2035" cy="1220.8" r="2.5" fill="#a8f2ff" stroke="#2a84ac" stroke-width="1.7"/><circle cx="2026.8" cy="1228.8" r="2.5" fill="#a8f2ff" stroke="#2a84ac" stroke-width="1.7"/>
<text x="2050.5" y="1225" font-size="18.5" fill="#1a1a1a" textLength="111" lengthAdjust="spacingAndGlyphs">Snipping Tool</text>
<circle cx="2428.5" cy="1220" r="1.2" fill="#333"/><circle cx="2436" cy="1220" r="1.2" fill="#333"/><circle cx="2443.5" cy="1220" r="1.2" fill="#333"/>
<path d="M2489 1213.3L2502 1226.3M2502 1213.3L2489 1226.3" stroke="#333" stroke-width="1.3"/>
<text x="2014.5" y="1282.5" font-size="20.8" fill="#1a1a1a" textLength="389" lengthAdjust="spacingAndGlyphs">Screenshot copied to clipboard and saved</text>
<text x="2014.5" y="1310.5" font-size="20.8" fill="#5c5c5c" textLength="404" lengthAdjust="spacingAndGlyphs">Select here to mark up and share the image</text>
</svg></body></html>
